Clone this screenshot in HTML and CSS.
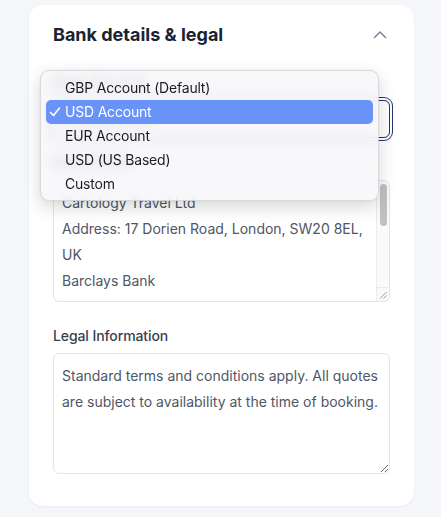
FILE: index.html
```html
<!DOCTYPE html>
<html lang="en">

<head>
    <meta charset="UTF-8">
    <meta name="viewport" content="width=device-width, initial-scale=1.0">
    <title>Bank details &amp; legal</title>
    <link rel="stylesheet" href="styles.css">
</head>

<body>
    <div class="card">
        <div class="card-header">
            <h2 class="card-title">Bank details &amp; legal</h2>
            <svg class="chevron" width="16" height="16" viewBox="0 0 16 16" fill="none">
                <path d="M2.5 10.5L8 5l5.5 5.5" stroke="#7b8497" stroke-width="1.5" stroke-linecap="round" stroke-linejoin="round" />
            </svg>
        </div>

        <div class="field">
            <label class="field-label">Bank Account</label>
            <div class="select">
                <span>USD Account</span>
                <svg width="12" height="12" viewBox="0 0 12 12" fill="none">
                    <path d="M3 4.5l3 3 3-3" stroke="#6b7280" stroke-width="1.5" stroke-linecap="round" />
                </svg>
            </div>
        </div>

        <div class="field field-details">
            <label class="field-label">Bank Details</label>
            <div class="textarea-wrap">
                <textarea class="textarea textarea-details">Cartology Travel Ltd
Address: 17 Dorien Road, London, SW20 8EL, UK
Barclays Bank
Sort Code: 20-45-77
Account Number: 83921046
IBAN: GB33 BARC 2045 7783 9210 46
SWIFT/BIC: BARCGB22
Account Name: Cartology Travel Ltd
Reference: Booking number
Currency: USD</textarea>
                <!-- scrollbar drawn over the textarea -->
                <div class="scrollbar">
                    <div class="scrollbar-thumb"></div>
                </div>
                <div class="scrollbar-corner">
                    <svg width="8" height="8" viewBox="0 0 8 8" fill="none">
                        <path d="M7.5 1L1 7.5M7.5 4.5L4.5 7.5" stroke="#8a8a8a" stroke-width="0.9" />
                    </svg>
                </div>
            </div>
        </div>

        <div class="field field-legal">
            <label class="field-label">Legal Information</label>
            <textarea class="textarea textarea-legal">Standard terms and conditions apply. All quotes are subject to availability at the time of booking.</textarea>
        </div>

        <!-- open select popup -->
        <div class="dropdown">
            <div class="option">GBP Account (Default)</div>
            <div class="option option-selected">
                <svg class="check" width="12" height="12" viewBox="0 0 12 12" fill="none">
                    <path d="M1.5 6.5l3 3L10.5 2" stroke="#fff" stroke-width="1.6" stroke-linecap="round" stroke-linejoin="round" />
                </svg>
                USD Account
            </div>
            <div class="option">EUR Account</div>
            <div class="option">USD (US Based)</div>
            <div class="option">Custom</div>
        </div>
    </div>
</body>

</html>
```

FILE: styles.css
```css
body,
html {
    margin: 0;
    padding: 0;
}

body {
    background-color: #f4f6fa;
    font-family: Inter, "Noto Sans", Arial, sans-serif;
    padding: 5px 27px 11px 29px;
}

.card {
    position: relative;
    background-color: #fff;
    border-radius: 14px;
    padding: 16px 24px 32px;
    box-shadow: 0 1px 2px rgba(16, 24, 40, 0.05);
}

.card-header {
    display: flex;
    align-items: center;
    justify-content: space-between;
    margin-bottom: 23px;
}

.card-title {
    margin: 0;
    font-size: 18px;
    line-height: 28px;
    font-weight: 700;
    color: #1b2333;
}

.chevron {
    margin-right: 2px;
}

.field {
    display: flex;
    flex-direction: column;
}

.field-details {
    margin-top: 14px;
}

.field-legal {
    margin-top: 24px;
}

.field-label {
    font-size: 14px;
    line-height: 20px;
    font-weight: 500;
    color: #374151;
    margin-bottom: 8px;
    letter-spacing: -0.1px;
}

.field-legal .field-label {
    margin-bottom: 7px;
}

.select {
    display: flex;
    align-items: center;
    justify-content: space-between;
    box-sizing: border-box;
    height: 38px;
    padding: 0 12px;
    border: 1px solid #233876;
    border-radius: 6px;
    box-shadow: 0 0 0 2px #fff, 0 0 0 3px #233876;
    font-size: 14px;
    color: #1f2937;
}

.textarea {
    box-sizing: border-box;
    width: 100%;
    margin: 0;
    padding: 9px 8px;
    border: 1px solid #e2e5ec;
    border-radius: 6px;
    font-family: inherit;
    font-size: 14px;
    line-height: 26px;
    color: #4f5667;
    background-color: #fff;
    outline: none;
    display: block;
}

.textarea-wrap {
    position: relative;
}

.textarea-details {
    height: 122px;
    padding-right: 22px;
    overflow: hidden;
    resize: none;
}

.textarea-legal {
    height: 121px;
}

.scrollbar {
    position: absolute;
    top: 1px;
    right: 1px;
    bottom: 15px;
    width: 13px;
    box-sizing: border-box;
    padding: 3px 2px 0 3px;
    background-color: #fafafa;
    border-left: 1px solid #ebebeb;
    border-top-right-radius: 5px;
}

.scrollbar-thumb {
    height: 42px;
    background-color: #c1c1c1;
    border-radius: 4px;
}

.scrollbar-corner {
    position: absolute;
    right: 1px;
    bottom: 1px;
    width: 13px;
    height: 14px;
    box-sizing: border-box;
    display: flex;
    align-items: flex-end;
    justify-content: flex-end;
    padding: 0 2px 2px 0;
    background-color: #fafafa;
    border-left: 1px solid #ebebeb;
    border-top: 1px solid #ebebeb;
    border-bottom-right-radius: 5px;
}

.dropdown {
    position: absolute;
    left: 11px;
    top: 65px;
    width: 339px;
    box-sizing: border-box;
    padding: 5px 5px 4px;
    border-radius: 9px;
    border: 0.5px solid rgba(0, 0, 0, 0.12);
    background-color: rgba(246, 246, 250, 0.82);
    backdrop-filter: blur(6px);
    box-shadow: 0 6px 18px rgba(0, 0, 0, 0.16), 0 0 1px rgba(0, 0, 0, 0.2);
}

.option {
    position: relative;
    height: 24px;
    line-height: 24px;
    padding-left: 19px;
    border-radius: 5px;
    font-size: 14px;
    letter-spacing: -0.2px;
    color: #1c1c1e;
}

.option-selected {
    background-color: #6a93fa;
    color: #fff;
}

.check {
    position: absolute;
    left: 3px;
    top: 6px;
}
```
